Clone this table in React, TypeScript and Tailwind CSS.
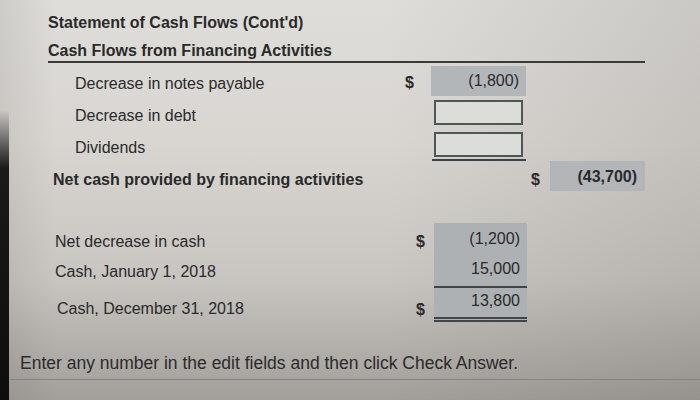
import React from "react";

const cell = "bg-[#b3b6b9]";
const cell2 = "bg-[#aeb1b4]";

export default function App() {
  return (
    <div className="relative w-[700px] h-[400px] overflow-hidden font-['Liberation_Sans',Arial,sans-serif] text-[#2a2a2b] bg-[linear-gradient(180deg,#dfddd9_0%,#d9d6d2_35%,#c8c4c0_70%,#a29e9a_100%)]">
      <div className="absolute inset-0 bg-[linear-gradient(90deg,rgba(60,55,50,0.10)_0%,rgba(0,0,0,0)_8%,rgba(0,0,0,0)_55%,rgba(60,55,50,0.12)_100%)]" />
      <div className="absolute left-0 top-[110px] bottom-0 w-[9px] bg-[linear-gradient(180deg,rgba(20,20,20,0)_0%,#1a1a1a_20%,#0d0d0d_100%)]" />

      <div className="relative pl-[48px] pt-[12px]">
        <div className="h-[22px] leading-[22px] text-[16px] font-bold">
          Statement of Cash Flows (Cont'd)
        </div>
        <div className="mt-[6px] w-[597px] h-[23px] leading-[21px] text-[16px] font-bold border-b-[2px] border-[#3a3a3a]">
          Cash Flows from Financing Activities
        </div>

        {/* Decrease in notes payable */}
        <div className="mt-[3px] flex h-[30px] items-center text-[16px]">
          <div className="w-[357px] pl-[27px] pt-[6px]">Decrease in notes payable</div>
          <div className="w-[26px] pt-[4px] font-bold">$</div>
          <div className={`w-[95px] h-full ${cell} flex items-center justify-end pr-[7px]`}>(1,800)</div>
        </div>

        {/* Decrease in debt */}
        <div className="mt-[4px] flex h-[25px] items-center text-[16px]">
          <div className="w-[357px] pl-[27px] pt-[6px]">Decrease in debt</div>
          <div className="w-[29px]" />
          <div className="w-[89px] h-full border-[2px] border-[#4d5757] bg-[#dcdcd8]" />
        </div>

        {/* Dividends */}
        <div className="mt-[7px] flex h-[25px] items-center text-[16px]">
          <div className="w-[357px] pl-[27px] pt-[6px]">Dividends</div>
          <div className="w-[29px]" />
          <div className="w-[89px] h-full border-[2px] border-[#4d5757] bg-[#dcdcd8]" />
        </div>
        <div className="mt-[2px] ml-[384px] w-[94px] h-[2px] bg-[#3c4242]" />

        {/* Net cash provided */}
        <div className="flex h-[30px] items-center text-[16px] font-bold">
          <div className="w-[483px] pl-[5px] pt-[8px]">Net cash provided by financing activities</div>
          <div className="w-[19px] pt-[8px]">$</div>
          <div className={`w-[95px] h-full ${cell} flex items-center justify-end pr-[8px] pt-[2px]`}>(43,700)</div>
        </div>

        {/* Section 2 */}
        <div className="mt-[32px] text-[16px]">
          <div className="flex h-[30px] items-center">
            <div className="w-[368px] pl-[7px] pt-[7px]">Net decrease in cash</div>
            <div className="w-[18px] pt-[7px] font-bold">$</div>
            <div className={`w-[93px] h-full ${cell2} flex items-center justify-end pr-[7px] pt-[2px]`}>(1,200)</div>
          </div>
          <div className="flex h-[33px] items-center">
            <div className="w-[368px] pl-[7px] pt-[5px]">Cash, January 1, 2018</div>
            <div className="w-[18px]" />
            <div className={`w-[93px] h-full ${cell2} flex items-center justify-end pr-[7px] pb-[2px]`}>15,000</div>
          </div>
          <div className="flex h-[36px] items-center">
            <div className="w-[368px] pl-[9px] pt-[10px]">Cash, December 31, 2018</div>
            <div className="w-[18px] pt-[12px] font-bold">$</div>
            <div className={`w-[93px] h-full ${cell2} border-t-[2px] border-b-[5px] border-double border-[#3f4446] flex items-center justify-end pr-[7px] pb-[4px]`}>13,800</div>
          </div>
        </div>
      </div>

      {/* Footer */}
      <div className="relative mt-[30px] pl-[20px] h-[22px] leading-[22px] text-[17.5px] text-[#2c2b2c]">
        Enter any number in the edit fields and then click Check Answer.
      </div>
      <div className="relative mt-[5px] ml-[10px] h-[1px] bg-[#85817d]" />
    </div>
  );
}
